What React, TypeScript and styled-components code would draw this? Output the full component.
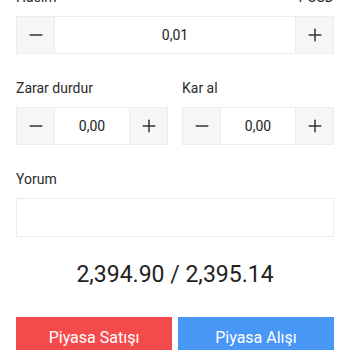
import React, { FC } from 'react'
import styled, { createGlobalStyle } from 'styled-components';
import { Minus, Plus } from 'lucide-react';

const GlobalStyle = createGlobalStyle`
    html, body {
        margin: 0;
        padding: 0;
        background: #fff;
        font-family: Roboto, "Liberation Sans", sans-serif;
        color: #222;
        overflow: hidden;
    }
`;

const Page = styled.div`
    width: 350px;
    box-sizing: border-box;
    padding: 0 16px;
    margin-top: -13px;
`;

const Field = styled.div`
    display: flex;
    flex-direction: column;
    gap: 9px;
    margin-bottom: 24px;
    min-width: 0;
`;

const LabelRow = styled.div`
    display: flex;
    justify-content: space-between;
    font-size: 14px;
    line-height: 20px;
    color: #2a2a2a;
`;

const TwoCols = styled.div`
    display: grid;
    grid-template-columns: 1fr 1fr;
    column-gap: 14px;
`;

const StepperBox = styled.div`
    display: flex;
    height: 38px;
    box-sizing: border-box;
    border: 1px solid #ececec;
    background: #fff;
`;

const StepBtn = styled.div`
    width: 37px;
    flex-shrink: 0;
    display: flex;
    align-items: center;
    justify-content: center;
    background: #f6f6f6;
    color: #333;
`;

const StepValue = styled.div`
    flex: 1;
    display: flex;
    align-items: center;
    justify-content: center;
    font-size: 14px;
    color: #222;
    border-left: 1px solid #ececec;
    border-right: 1px solid #ececec;
`;

const CommentBox = styled.div`
    height: 39px;
    box-sizing: border-box;
    border: 1px solid #ececec;
`;

const Price = styled.div`
    text-align: center;
    font-size: 23px;
    line-height: 28px;
    color: #1f1f1f;
    margin-top: 7px;
    margin-bottom: 28px;
`;

const Actions = styled.div`
    display: grid;
    grid-template-columns: 1fr 1fr;
    column-gap: 6px;
`;

const ActionBtn = styled.div<{ $color: string }>`
    height: 40px;
    display: flex;
    align-items: center;
    justify-content: center;
    background: ${p => p.$color};
    color: #fff;
    font-size: 16px;
`;

const Stepper: FC<{ value: string }> = ({ value }) => (
    <StepperBox>
        <StepBtn><Minus size={20} strokeWidth={1.8} /></StepBtn>
        <StepValue>{value}</StepValue>
        <StepBtn><Plus size={20} strokeWidth={1.8} /></StepBtn>
    </StepperBox>
)

const App: FC = () => {
    return (
        <Page>
            <GlobalStyle />
            <Field>
                <LabelRow>
                    <span>Hacim</span>
                    <span>1 USD</span>
                </LabelRow>
                <Stepper value='0,01' />
            </Field>
            <TwoCols>
                <Field>
                    <LabelRow>Zarar durdur</LabelRow>
                    <Stepper value='0,00' />
                </Field>
                <Field>
                    <LabelRow>Kar al</LabelRow>
                    <Stepper value='0,00' />
                </Field>
            </TwoCols>
            <Field>
                <LabelRow>Yorum</LabelRow>
                <CommentBox />
            </Field>
            <Price>2,394.90 / 2,395.14</Price>
            <Actions>
                <ActionBtn $color='#f54a4c'>Piyasa Satışı</ActionBtn>
                <ActionBtn $color='#4896f6'>Piyasa Alışı</ActionBtn>
            </Actions>
        </Page>
    )
}

export default App
